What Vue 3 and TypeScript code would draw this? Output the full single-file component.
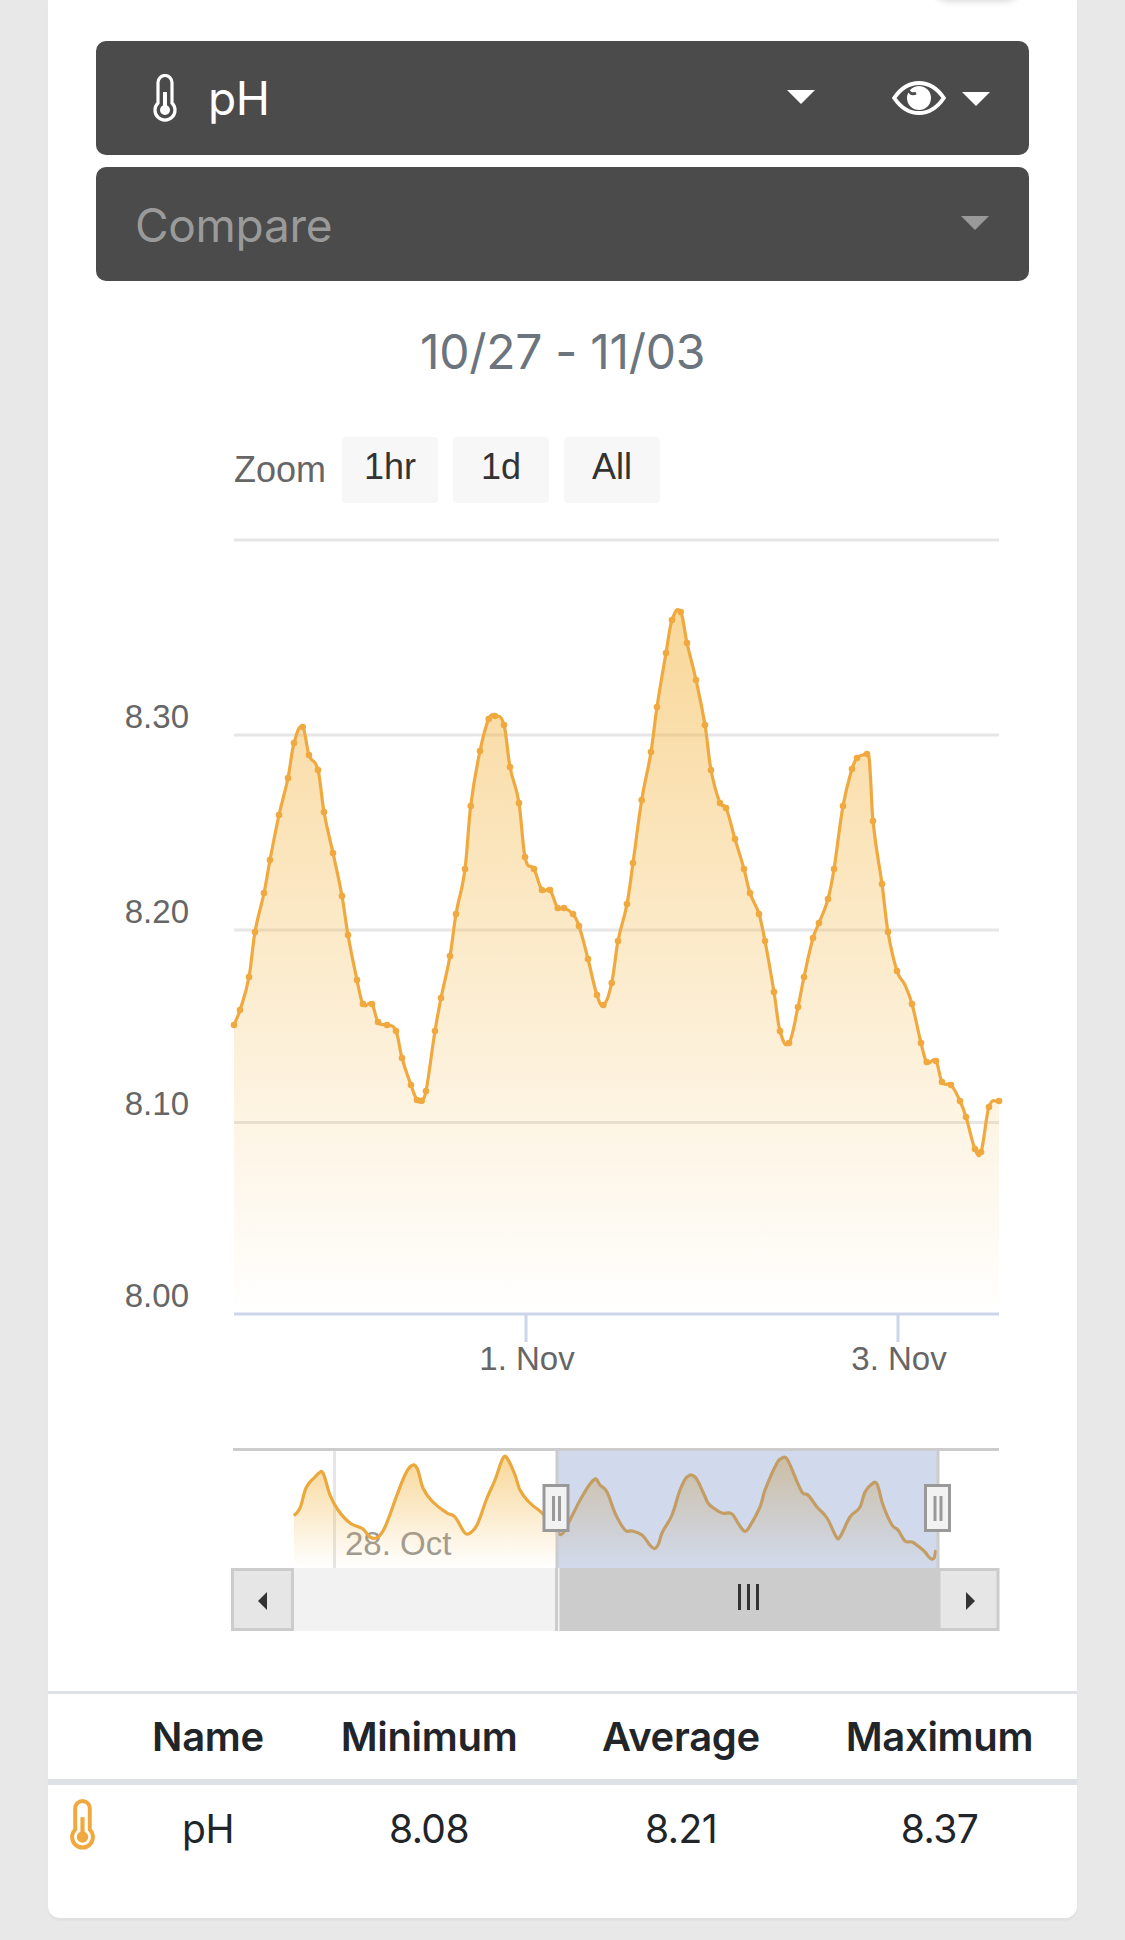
<script setup lang="ts">
type Pt = [number, number]

const main: Pt[] = [[234,1025],[240,1010],[249,977],[255,932],[264,893],[270,860],[279,815],[288,778],[294,743],[302.7,727],[309,755],[318,770],[324,812],[333,853],[342,896],[348,935],[357,980],[363,1004],[372,1004],[378,1022],[387,1025],[396,1031],[402,1058],[411,1085],[417,1100],[421.7,1100.7],[426,1091],[435,1031],[441,998],[450,956],[456,914],[465,869],[470.7,806],[480,751],[488.7,719],[495,716],[504,725],[510,767],[519,803],[525,857],[534,869],[542,890],[550,890],[557.7,908],[564,908],[573,914],[579,926],[588,959],[597,995],[603.3,1005],[611.7,983],[618,941],[627,904],[633,863],[641.7,800],[651,752],[657,707],[666,653],[672,620],[680.7,612],[687,643],[696,680],[705,725],[711,770],[720,803],[726,808],[735,839],[744,869],[750,893],[759,914],[765,941],[774,992],[780,1031],[789,1043],[798,1007],[804,977],[813,938],[819,923],[828,899],[834,869],[843,806],[852,769],[857,758],[863,755],[867,754],[869.5,762],[873,821],[882,884],[888,932],[897,971],[905,985],[912,1004],[921,1043],[926.7,1062],[936,1061],[942,1082],[951,1085],[960,1101],[966,1117],[975,1149],[981,1152],[989,1107],[999,1101]]

// Points added only to shape the curve; the reference shows no marker on them.
const unmarked = new Set([863, 869.5, 905])
const markers = main.filter((p) => !unmarked.has(p[0]))

const nav: Pt[] = [[294,1515.7],[300,1508],[306,1488],[315,1477],[319,1473],[323,1473],[330,1495],[338,1510],[350,1523],[363,1529],[370,1537],[378,1537],[385,1527],[397,1495],[405,1475],[411,1466],[417,1468],[423,1488],[433,1502],[447,1513],[455,1517],[465,1533],[470,1533],[477,1525],[487,1498],[495,1480],[503,1458],[507,1458],[515,1475],[520,1490],[530,1503],[543,1514],[558,1533],[563,1533],[570,1520],[583,1495],[595,1479],[600,1485],[607,1492],[615,1513],[625,1530],[632,1531],[642,1535],[653,1548],[658,1545],[662,1533],[672,1515],[680,1490],[687,1477],[695,1477],[703,1492],[708,1503],[715,1509],[722,1513],[732,1514],[738,1523],[744,1531],[748,1529],[760,1507],[765,1490],[777,1463],[782,1458],[787,1459],[802,1492],[808,1495],[817,1507],[827,1518],[837,1538],[840,1537],[850,1517],[860,1507],[865,1492],[872,1484],[877,1484],[883,1505],[892,1525],[898,1530],[905,1541],[912,1542],[918,1546],[925,1552],[930,1558],[934,1558],[936,1550]]

// Spline in the way the charting library draws it: each point gets collinear control arms.
function spline(pts: Pt[]): string {
  const s = 1.5
  const arms = pts.map((p, i) => {
    const prev = pts[Math.max(i - 1, 0)]
    const next = pts[Math.min(i + 1, pts.length - 1)]
    const lx = (s * p[0] + prev[0]) / (s + 1)
    let ly = (s * p[1] + prev[1]) / (s + 1)
    const rx = (s * p[0] + next[0]) / (s + 1)
    let ry = (s * p[1] + next[1]) / (s + 1)
    if (rx !== lx) {
      const c = ((ry - ly) * (rx - p[0])) / (rx - lx) + p[1] - ry
      ly += c
      ry += c
    }
    return { lx, ly, rx, ry }
  })
  let d = `M${pts[0][0]} ${pts[0][1]}`
  for (let i = 1; i < pts.length; i++) {
    const a = arms[i - 1]
    const b = arms[i]
    d += `C${a.rx.toFixed(1)} ${a.ry.toFixed(1)} ${b.lx.toFixed(1)} ${b.ly.toFixed(1)} ${pts[i][0]} ${pts[i][1]}`
  }
  return d
}

function area(pts: Pt[], base: number): string {
  const last = pts[pts.length - 1]
  return `${spline(pts)}L${last[0]} ${base}L${pts[0][0]} ${base}Z`
}

const mainLine = spline(main)
const mainArea = area(main, 1314)
const navLine = spline(nav)
const navArea = area(nav, 1568)

const grid = [541, 736, 931, 1123.5]
const yLabels = [
  { t: '8.30', y: 729 },
  { t: '8.20', y: 924 },
  { t: '8.10', y: 1116 },
  { t: '8.00', y: 1308 },
]
const xLabels = [
  { t: '1. Nov', x: 526 },
  { t: '3. Nov', x: 898 },
]
const zoomButtons = ['1hr', '1d', 'All']
const heads = ['', 'Name', 'Minimum', 'Average', 'Maximum']
const values = ['pH', '8.08', '8.21', '8.37']
</script>

<template>
  <div class="page">
    <div class="card">
      <div class="peek"></div>
      <div class="controls">
        <div class="select">
          <svg class="thermo" viewBox="0 0 24 48" fill="none" stroke="currentColor" stroke-width="3.2">
            <path d="M5 8.5a7 7 0 0 1 14 0V29a10 10 0 1 1-14 0Z" />
            <circle cx="12" cy="36" r="5" fill="currentColor" stroke="none" />
            <rect x="10" y="18" width="4" height="18" fill="currentColor" stroke="none" />
          </svg>
          <span class="value">pH</span>
          <span class="caret first"></span>
          <svg class="eye" viewBox="0 0 54 34">
            <path d="M2.2 17C9 7 18 2 27 2s18 5 24.800 15C45 27 36 32 27 32S9 27 2.200 17Z" fill="none" stroke="#fff" stroke-width="4" />
            <circle cx="27" cy="17" r="12" fill="#fff" />
            <path d="M16 8C17 12 20 14 24 12" fill="none" stroke="#4a4b4a" stroke-width="3" />
          </svg>
          <span class="caret second"></span>
        </div>
        <div class="select compare">
          <span class="placeholder">Compare</span>
          <span class="caret dim"></span>
        </div>
        <div class="date">10/27 - 11/03</div>
        <div class="zoom">
          <span class="zoom-label">Zoom</span>
          <span v-for="b in zoomButtons" :key="b" class="zoom-btn">{{ b }}</span>
        </div>
        <svg class="chart" viewBox="96 510 933 1125" width="933" height="1125">
          <defs>
            <linearGradient id="fillMain" x1="0" y1="612" x2="0" y2="1314" gradientUnits="userSpaceOnUse">
              <stop offset="0" stop-color="#f2b035" stop-opacity="0.5" />
              <stop offset="1" stop-color="#f2b035" stop-opacity="0" />
            </linearGradient>
            <linearGradient id="fillNav" x1="0" y1="1458" x2="0" y2="1568" gradientUnits="userSpaceOnUse">
              <stop offset="0" stop-color="#f2b035" stop-opacity="0.5" />
              <stop offset="1" stop-color="#f2b035" stop-opacity="0" />
            </linearGradient>
          </defs>

          <rect v-for="g in grid" :key="g" x="234" :y="g - 1.5" width="765" height="3" fill="#e6e6e6" />
          <rect x="234" y="1313.500" width="765" height="3" fill="#ccd6eb" />
          <rect v-for="l in xLabels" :key="l.t" :x="l.x - 1.500" y="1316" width="3" height="27" fill="#ccd6eb" />

          <g transform="translate(0 1)">
            <path :d="mainArea" fill="url(#fillMain)" />
            <path :d="mainLine" fill="none" stroke="#f0a93f" stroke-width="3.2" stroke-linejoin="round" />
            <circle v-for="(p, i) in markers" :key="i" :cx="p[0]" :cy="p[1]" r="3.3" fill="#f0a93f" />
          </g>

          <text v-for="l in yLabels" :key="l.t" x="189" :y="l.y" text-anchor="end" class="axis">{{ l.t }}</text>
          <text v-for="l in xLabels" :key="l.t" :x="l.x + 1" y="1371" text-anchor="middle" class="axis">{{ l.t }}</text>

          <!-- navigator -->
          <rect x="333" y="1451" width="3" height="118" fill="#e6e6e6" />
          <text x="345" y="1556" class="axis nav-label">28. Oct</text>
          <g transform="translate(0 1)">
            <path :d="navArea" fill="url(#fillNav)" />
            <path :d="navLine" fill="none" stroke="#eba83c" stroke-width="3.2" stroke-linejoin="round" />
          </g>
          <rect x="556" y="1452" width="381" height="117" fill="#6685c2" fill-opacity="0.3" />
          <rect x="233" y="1449" width="766" height="3" fill="#ccc" />
          <rect x="555.500" y="1452" width="3" height="117" fill="#ccc" />
          <rect x="936.500" y="1452" width="3" height="117" fill="#ccc" />

          <rect x="294" y="1569" width="645" height="63" fill="#f2f2f2" />
          <rect x="555" y="1569" width="3" height="63" fill="#ccc" />
          <rect x="558" y="1569" width="1.500" height="63" fill="#f2f2f2" />
          <rect x="559.500" y="1569" width="379.500" height="63" fill="#ccc" />
          <rect x="738" y="1585" width="3" height="26" fill="#333" />
          <rect x="747" y="1585" width="3" height="26" fill="#333" />
          <rect x="756" y="1585" width="3" height="26" fill="#333" />

          <rect x="232.500" y="1570.500" width="60" height="60" fill="#e6e6e6" stroke="#ccc" stroke-width="3" />
          <path d="M267 1593v18l-9-9Z" fill="#333" />
          <rect x="939" y="1570.500" width="59" height="60" fill="#e6e6e6" stroke="#ccc" stroke-width="3" />
          <path d="M966 1593v18l9-9Z" fill="#333" />

          <g v-for="h in [544, 925.500]" :key="h">
            <rect :x="h" y="1486.500" width="24" height="45" fill="#f2f2f2" stroke="#999" stroke-width="3" />
            <rect :x="h + 8" y="1497" width="3" height="25" fill="#999" />
            <rect :x="h + 14" y="1497" width="3" height="25" fill="#999" />
          </g>
        </svg>
      </div>

      <div class="table">
        <div class="row head">
          <div v-for="h in heads" :key="h" class="cell">{{ h }}</div>
        </div>
        <div class="row body">
          <div class="cell">
            <svg class="thermo-small" viewBox="0 0 24 48" fill="none" stroke="currentColor" stroke-width="3.800">
              <path d="M5 8.500a7 7 0 0 1 14 0V29a10 10 0 1 1-14 0Z" />
              <circle cx="12" cy="36" r="5.500" fill="currentColor" stroke="none" />
              <rect x="10" y="17" width="4" height="19" fill="currentColor" stroke="none" />
            </svg>
          </div>
          <div v-for="v in values" :key="v" class="cell">{{ v }}</div>
        </div>
      </div>
    </div>
  </div>
</template>

<style scoped>
.page {
  box-sizing: border-box;
  width: 1125px;
  height: 1940px;
  padding: 0 48px;
  background: #e8e8e8;
  overflow: hidden;
  font-family: Inter, "Liberation Sans", sans-serif;
}
.card {
  position: relative;
  box-sizing: border-box;
  height: 1918px;
  background: #fff;
  border-radius: 0 0 12px 12px;
  box-shadow: 0 3px 2px rgba(0, 0, 0, 0.03);
  overflow: hidden;
}
.peek {
  position: absolute;
  top: -30px;
  left: 886px;
  width: 86px;
  height: 30px;
  border-radius: 15px;
  box-shadow: 0 2px 6px rgba(0, 0, 0, 0.14);
}
.controls {
  padding: 41px 48px 0;
}
.select {
  display: flex;
  align-items: center;
  position: relative;
  height: 114px;
  border-radius: 10px;
  background: #4a4b4a;
  color: #fff;
}
.compare {
  margin-top: 12px;
}
.thermo {
  position: absolute;
  left: 57px;
  top: 33px;
  width: 24px;
  height: 48px;
}
.value {
  margin-left: 112px;
  font-size: 46px;
  line-height: 1;
  letter-spacing: -0.5px;
}
.placeholder {
  margin-left: 39px;
  font-size: 46px;
  line-height: 1;
  letter-spacing: -0.3px;
  color: #9a9a9a;
  transform: translateY(1px);
}
.caret {
  position: absolute;
  width: 0;
  height: 0;
  border-left: 14px solid transparent;
  border-right: 14px solid transparent;
  border-top: 14px solid #fff;
}
.first {
  left: 691px;
  top: 49px;
}
.second {
  left: 866px;
  top: 51px;
}
.dim {
  left: 865px;
  top: 49px;
  border-top-color: #999;
}
.eye {
  position: absolute;
  left: 796px;
  top: 40px;
  width: 54px;
  height: 34px;
}
.date {
  margin-top: 44px;
  text-align: center;
  font-size: 48px;
  line-height: 54px;
  letter-spacing: -0.3px;
  color: #6c757d;
}
.zoom {
  display: flex;
  align-items: flex-start;
  gap: 15px;
  margin: 58px 0 0 138px;
}
.zoom-label {
  font-family: "Liberation Sans", Arial, sans-serif;
  font-size: 36px;
  line-height: 66px;
  color: #666;
  margin-right: 1px;
}
.zoom-btn {
  box-sizing: border-box;
  width: 96px;
  height: 66px;
  border-radius: 4px;
  background: #f7f7f7;
  color: #333;
  font-family: "Liberation Sans", Arial, sans-serif;
  font-size: 36px;
  line-height: 60px;
  text-align: center;
}
.chart {
  display: block;
  margin-top: 6px;
}
.axis {
  font-family: "Liberation Sans", Arial, sans-serif;
  font-size: 33px;
  fill: #666;
}
.nav-label {
  fill: #999;
}
.table {
  margin-top: 57px;
  color: #212529;
}
.row {
  display: grid;
  grid-template-columns: 70px 180px 262px 242px 275px;
  text-align: center;
}
.head {
  height: 85px;
  border-top: 3px solid #dee2e6;
  border-bottom: 6px solid #dee2e6;
  align-items: center;
  font-size: 40px;
  font-weight: 600;
  letter-spacing: -0.3px;
  line-height: 78px;
}
.body {
  padding-top: 14px;
  font-size: 39px;
  line-height: 60px;
  letter-spacing: -0.5px;
}
.thermo-small {
  display: block;
  width: 25px;
  height: 51px;
  margin-left: 22px;
  color: #f0a93f;
}
</style>

<style>
html,
body {
  margin: 0;
  background: #e8e8e8;
}
</style>
